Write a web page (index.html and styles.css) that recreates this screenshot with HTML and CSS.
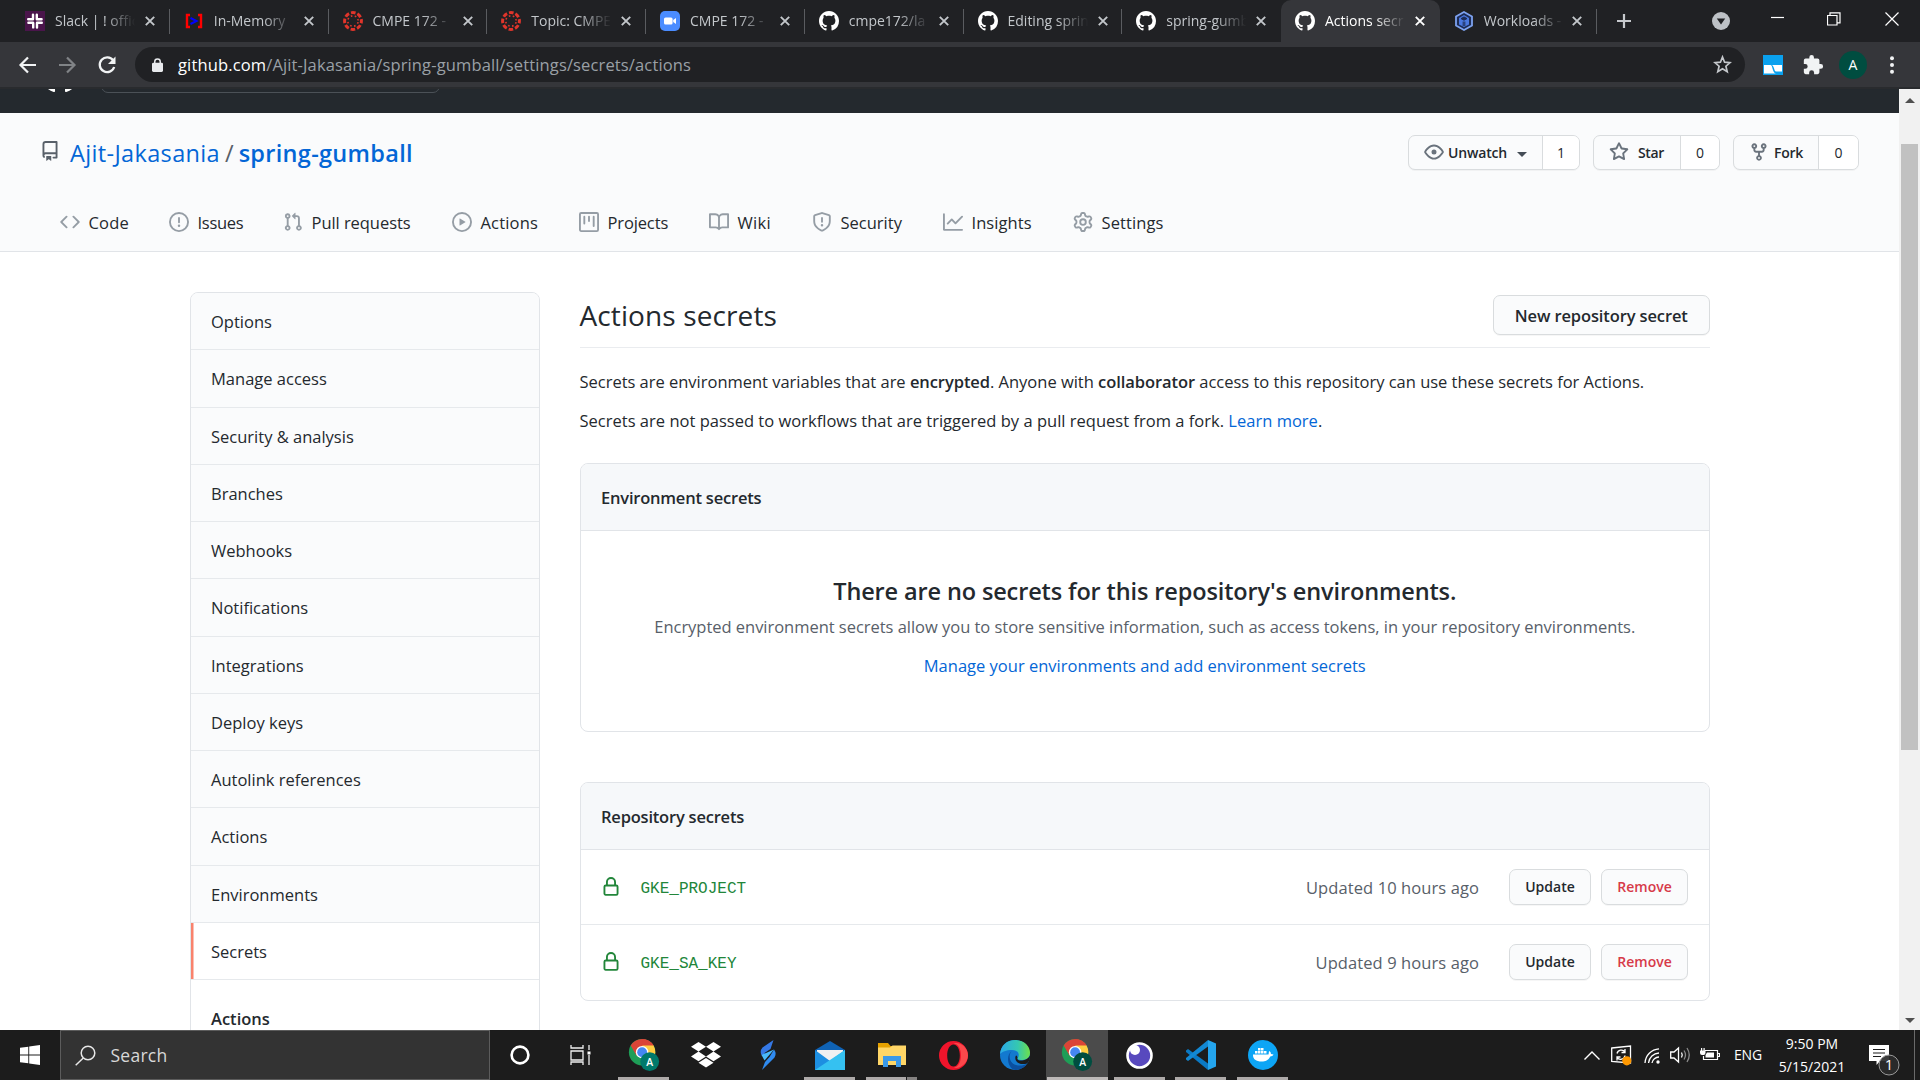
FILE: index.html
```html
<!DOCTYPE html>
<html lang="en">
<head>
<meta charset="utf-8">
<title>Actions secrets</title>
<link rel="stylesheet" href="styles.css">
</head>
<body>
<svg width="0" height="0" class="defs" aria-hidden="true">
  <symbol id="github" viewBox="0 0 16 16"><path fill="currentColor" d="M8 0C3.58 0 0 3.58 0 8c0 3.54 2.29 6.53 5.47 7.59.4.07.55-.17.55-.38 0-.19-.01-.82-.01-1.49-2.01.37-2.53-.49-2.69-.94-.09-.23-.48-.94-.82-1.13-.28-.15-.68-.52-.01-.53.63-.01 1.08.58 1.23.82.72 1.21 1.87.87 2.33.66.07-.52.28-.87.51-1.07-1.78-.2-3.64-.89-3.64-3.95 0-.87.31-1.59.82-2.15-.08-.2-.36-1.02.08-2.12 0 0 .67-.21 2.2.82.64-.18 1.32-.27 2-.27.68 0 1.36.09 2 .27 1.53-1.04 2.2-.82 2.2-.82.44 1.1.16 1.92.08 2.12.51.56.82 1.27.82 2.15 0 3.07-1.87 3.75-3.65 3.95.29.25.54.73.54 1.48 0 1.07-.01 1.93-.01 2.2 0 .21.15.46.55.38A8.013 8.013 0 0016 8c0-4.42-3.58-8-8-8z"/></symbol>
  <symbol id="close" viewBox="0 0 10 10"><path d="M.8.8l8.4 8.4M9.2.8L.8 9.2" stroke="currentColor" stroke-width="1.9" fill="none"/></symbol>
  <symbol id="canvas" viewBox="0 0 20 20"><circle cx="10" cy="10" r="8.4" fill="none" stroke="#e0352b" stroke-width="3" stroke-dasharray="4.6 2" stroke-dashoffset="2.3"/><circle cx="10" cy="10" r="5.2" fill="none" stroke="#e0352b" stroke-width="1.6" stroke-dasharray="1.6 2.48" stroke-dashoffset="-1.2"/></symbol>
  <symbol id="lock" viewBox="0 0 16 16"><path fill="currentColor" fill-rule="evenodd" d="M4 4v2h-.25A1.75 1.75 0 002 7.75v5.5c0 .966.784 1.75 1.75 1.75h8.5A1.75 1.75 0 0014 13.25v-5.5A1.75 1.75 0 0012.25 6H12V4a4 4 0 10-8 0zm6.5 2V4a2.5 2.5 0 10-5 0v2h5zM12 7.5h.25a.25.25 0 01.25.25v5.5a.25.25 0 01-.25.25h-8.5a.25.25 0 01-.25-.25v-5.5a.25.25 0 01.25-.25H12z"/></symbol>
  <symbol id="chrome" viewBox="0 0 36 36"><circle cx="16" cy="15" r="14" fill="#1e9e57"/><path d="M16 15L3.9 8A14 14 0 0128.1 8z" fill="#db4437"/><path d="M16 15V1a14 14 0 0112.2 7z" fill="#db4437"/><path d="M16 8h12.1A14 14 0 0116 29l6-10.5z" fill="#ffcd41"/><path d="M3.9 8L10 18.5 16 15V8z" fill="#db4437"/><circle cx="16" cy="15" r="6.6" fill="#fff"/><circle cx="16" cy="15" r="5.2" fill="#4587f3"/></symbol>
</svg>

<header class="tabs">
  <div class="tab"><svg class="fav" viewBox="0 0 20 20"><path fill="#4a154b" d="M0 0h20v20H0z"/><g stroke="#fff" stroke-width="2.4" stroke-linecap="round"><path d="M8 3.6v4.6M3.2 8.2H8M11.8 3.8v4.4M12 8.2h4.6M3.4 11.8H8M8.2 12v4.4M12 11.8h4.8M12 12v4.6"/></g></svg><span class="name">Slack | ! official</span><svg class="x"><use href="#close"/></svg></div>
  <div class="tab"><svg class="fav" viewBox="0 0 20 20"><path d="M6 4H3v12h3M14 4h3v12h-3" fill="none" stroke="#f00" stroke-width="2.4"/><path d="M6.500 7l6 3-6 3" fill="none" stroke="#00f" stroke-width="2"/></svg><span class="name">In-Memory</span><svg class="x"><use href="#close"/></svg></div>
  <div class="tab"><svg class="fav"><use href="#canvas"/></svg><span class="name">CMPE 172 -</span><svg class="x"><use href="#close"/></svg></div>
  <div class="tab"><svg class="fav"><use href="#canvas"/></svg><span class="name">Topic: CMPE</span><svg class="x"><use href="#close"/></svg></div>
  <div class="tab"><svg class="fav" viewBox="0 0 20 20"><rect width="20" height="20" rx="5" fill="#4a8cff"/><rect x="4" y="6.5" width="8.6" height="7" rx="1.6" fill="#fff"/><path d="M13.200 9l2.800-2v6l-2.800-2z" fill="#fff"/></svg><span class="name">CMPE 172 -</span><svg class="x"><use href="#close"/></svg></div>
  <div class="tab"><svg class="fav gh"><use href="#github"/></svg><span class="name">cmpe172/la</span><svg class="x"><use href="#close"/></svg></div>
  <div class="tab"><svg class="fav gh"><use href="#github"/></svg><span class="name">Editing sprin</span><svg class="x"><use href="#close"/></svg></div>
  <div class="tab last"><svg class="fav gh"><use href="#github"/></svg><span class="name">spring-gumb</span><svg class="x"><use href="#close"/></svg></div>
  <div class="tab active"><svg class="fav gh"><use href="#github"/></svg><span class="name">Actions secr</span><svg class="x"><use href="#close"/></svg></div>
  <div class="tab end"><svg class="fav" viewBox="0 0 20 20"><path d="M10 1l8 4.500v9L10 19l-8-4.500v-9z" fill="#1d2c55" stroke="#7da2f0" stroke-width="1.8"/><path d="M10 4l5 3v6.500L10 16l-5-2.500V7z" fill="#4a78e0"/><path d="M10 6l3 1.600-3 1.600-3-1.600zM9.200 10.500V15M10.800 10.500V15" fill="#1d2c55" stroke="#1d2c55"/></svg><span class="name">Workloads -</span><svg class="x"><use href="#close"/></svg></div>
  <svg class="plus" viewBox="0 0 16 16"><path d="M8 1v14M1 8h14" stroke="#c6c9cd" stroke-width="2.200"/></svg>
  <div class="window-controls">
    <svg width="18" height="18" viewBox="0 0 18 18"><circle cx="9" cy="9" r="9" fill="#bdc1c6"/><path d="M4.800 6.500h8.400L9 12.500z" fill="#202124"/></svg>
    <svg class="min" width="14" height="14" viewBox="0 0 14 14"><path d="M0 5.500h13" stroke="#fff" stroke-width="1.200"/></svg>
    <svg class="restore" width="14" height="14" viewBox="0 0 14 14"><path d="M.5 3.500h9.500v9.500H.5zM3 3.500V.8h10v10h-2.800" fill="none" stroke="#fff" stroke-width="1.200"/></svg>
    <svg class="quit" width="14" height="14" viewBox="0 0 14 14"><path d="M.5.5l13 13M13.500.5l-13 13" stroke="#fff" stroke-width="1.200"/></svg>
  </div>
</header>

<div class="toolbar">
  <svg width="20" height="20" viewBox="0 0 20 20" class="nav-ic"><path d="M19 10H4M11 2.500L3.500 10l7.500 7.500" fill="none" stroke="#f1f3f4" stroke-width="2.200"/></svg>
  <svg width="20" height="20" viewBox="0 0 20 20" class="nav-ic"><path d="M2 10h15M10 2.500l7.500 7.500-7.500 7.500" fill="none" stroke="#808386" stroke-width="2.200"/></svg>
  <svg width="20" height="20" viewBox="0 0 20 20" class="nav-ic"><path d="M16.200 5.400A7.400 7.400 0 1017.200 12" fill="none" stroke="#f1f3f4" stroke-width="2.300"/><path d="M18.500 1.500v7.500H11z" fill="#f1f3f4"/></svg>
  <div class="omnibox">
    <svg width="11" height="14" viewBox="0 0 12 15"><rect y="5" width="12" height="10" rx="1.500" fill="#e8eaed"/><path d="M3 6V4a3 3 0 016 0v2" fill="none" stroke="#e8eaed" stroke-width="1.600"/></svg>
    <span class="url"><b>github.com</b>/Ajit-Jakasania/spring-gumball/settings/secrets/actions</span>
    <svg class="bookmark" width="19" height="19" viewBox="0 0 19 19"><path d="M9.500 2l2.100 5.200 5.500.4-4.200 3.600 1.300 5.400-4.700-2.900-4.700 2.900 1.300-5.400-4.200-3.600 5.500-.4z" fill="none" stroke="#c4c7cb" stroke-width="1.700"/></svg>
  </div>
  <svg class="ext" width="20" height="20" viewBox="0 0 20 20"><path fill="#0aa1ee" d="M0 0h20v20H0z"/><path fill="#fff" d="M1 10h6.500c2.500 0 1.500 8.500 6 8.500H1zM9 10h10v6.500h-6C11 16.500 11.500 11.500 9 10z"/></svg>
  <svg class="puzzle" width="22" height="22" viewBox="0 0 24 24"><path fill="#f1f3f4" d="M20.500 11H19V7a2 2 0 00-2-2h-4V3.500a2.500 2.500 0 00-5 0V5H4a2 2 0 00-2 2v3.800h1.500a2.700 2.700 0 010 5.400H2V20a2 2 0 002 2h3.800v-1.500a2.700 2.700 0 015.400 0V22H17a2 2 0 002-2v-4h1.500a2.500 2.500 0 000-5z"/></svg>
  <span class="avatar">A</span>
  <svg class="dots" width="4" height="18" viewBox="0 0 4 18"><g fill="#f1f3f4"><circle cx="2" cy="2.200" r="2"/><circle cx="2" cy="9" r="2"/><circle cx="2" cy="15.800" r="2"/></g></svg>
</div>

<main class="viewport">
  <div class="page">
    <div class="gh-bar"><svg class="gh-logo"><use href="#github"/></svg><div class="gh-search"></div></div>
    <div class="repo-head">
      <div class="repo-row">
        <svg class="repo-ic" viewBox="0 0 16 16"><path fill="currentColor" fill-rule="evenodd" d="M2 2.500A2.500 2.500 0 014.500 0h8.750a.75.75 0 01.75.75v12.500a.75.75 0 01-.75.75h-2.500a.75.75 0 110-1.500h1.750v-2h-8a1 1 0 00-.714 1.700.75.75 0 01-1.072 1.050A2.495 2.495 0 012 11.500v-9zm10.500-1V9h-8c-.356 0-.694.074-1 .208V2.500a1 1 0 011-1h8zM5 12.250v3.250a.25.25 0 00.4.2l1.450-1.087a.25.25 0 01.3 0L8.600 15.700a.25.25 0 00.4-.2v-3.250a.25.25 0 00-.25-.25h-3.500a.25.25 0 00-.25.25z"/></svg>
        <h1 class="repo-name"><a class="owner">Ajit-Jakasania</a><span class="slash">/</span><a class="repo">spring-gumball</a></h1>
        <div class="social">
          <div class="btn-pair watch"><span class="l"><svg viewBox="0 0 16 16"><path fill="currentColor" fill-rule="evenodd" d="M1.679 7.932c.412-.621 1.242-1.750 2.366-2.717C5.175 4.242 6.527 3.500 8 3.500c1.473 0 2.824.742 3.955 1.715 1.124.967 1.954 2.096 2.366 2.717a.119.119 0 010 .136c-.412.621-1.242 1.750-2.366 2.717C10.825 11.758 9.473 12.500 8 12.500c-1.473 0-2.824-.742-3.955-1.715C2.920 9.818 2.090 8.690 1.679 8.068a.119.119 0 010-.136zM8 2c-1.981 0-3.670.992-4.933 2.078C1.797 5.169.88 6.423.43 7.100a1.619 1.619 0 000 1.798c.45.678 1.367 1.932 2.637 3.024C4.329 13.008 6.019 14 8 14c1.981 0 3.670-.992 4.933-2.078 1.270-1.091 2.187-2.345 2.637-3.023a1.619 1.619 0 000-1.798c-.45-.678-1.367-1.932-2.637-3.023C11.671 2.992 9.981 2 8 2zm0 8a2 2 0 100-4 2 2 0 000 4z"/></svg><span>Unwatch</span><i class="caret"></i></span><span class="n">1</span></div>
          <div class="btn-pair star"><span class="l"><svg viewBox="0 0 16 16"><path fill="currentColor" fill-rule="evenodd" d="M8 .25a.75.75 0 01.673.418l1.882 3.815 4.210.612a.75.75 0 01.416 1.279l-3.046 2.970.719 4.192a.75.75 0 01-1.088.791L8 12.347l-3.766 1.980a.75.75 0 01-1.088-.79l.72-4.194L.818 6.374a.75.75 0 01.416-1.280l4.210-.611L7.327.668A.75.75 0 018 .25zm0 2.445L6.615 5.500a.75.75 0 01-.564.41l-3.097.45 2.240 2.184a.75.75 0 01.216.664l-.528 3.084 2.769-1.456a.75.75 0 01.698 0l2.770 1.456-.53-3.084a.75.75 0 01.216-.664l2.240-2.183-3.096-.45a.75.75 0 01-.564-.41L8 2.694v.001z"/></svg><span>Star</span></span><span class="n">0</span></div>
          <div class="btn-pair fork"><span class="l"><svg viewBox="0 0 16 16"><path fill="currentColor" fill-rule="evenodd" d="M5 3.250a.75.75 0 11-1.500 0 .75.75 0 011.500 0zm0 2.122a2.250 2.250 0 10-1.500 0v.878A2.250 2.250 0 005.750 8.500h1.500v2.128a2.251 2.251 0 101.500 0V8.500h1.500a2.250 2.250 0 002.250-2.250v-.878a2.250 2.250 0 10-1.500 0v.878a.75.75 0 01-.75.75h-4.500A.75.75 0 015 6.250v-.878zm3.750 7.378a.75.75 0 11-1.500 0 .75.75 0 011.500 0zm3-8.750a.75.75 0 100-1.500.75.75 0 000 1.500z"/></svg><span>Fork</span></span><span class="n">0</span></div>
        </div>
      </div>
      <nav class="repo-nav">
        <a class="w-code"><svg viewBox="0 0 16 16"><path d="M4.720 3.220a.75.75 0 011.060 1.060L2.060 8l3.720 3.720a.75.75 0 11-1.060 1.060L.47 8.530a.75.75 0 010-1.060l4.250-4.250zm6.560 0a.75.75 0 10-1.060 1.060L13.940 8l-3.720 3.720a.75.75 0 101.060 1.060l4.250-4.250a.75.75 0 000-1.060l-4.250-4.250z"/></svg>Code</a>
        <a class="w-issues"><svg viewBox="0 0 16 16"><path d="M8 1.500a6.500 6.500 0 100 13 6.500 6.500 0 000-13zM0 8a8 8 0 1116 0A8 8 0 010 8zm9 3a1 1 0 11-2 0 1 1 0 012 0zm-.25-6.250a.75.75 0 00-1.500 0v3.500a.75.75 0 001.500 0v-3.500z"/></svg>Issues</a>
        <a class="w-pulls"><svg viewBox="0 0 16 16"><path d="M7.177 3.073L9.573.677A.25.25 0 0110 .854v4.792a.25.25 0 01-.427.177L7.177 3.427a.25.25 0 010-.354zM3.750 2.500a.75.75 0 100 1.500.75.75 0 000-1.500zm-2.250.75a2.250 2.250 0 113 2.122v5.256a2.251 2.251 0 11-1.500 0V5.372A2.250 2.250 0 011.500 3.250zM11 2.500h-1V4h1a1 1 0 011 1v5.628a2.251 2.251 0 101.500 0V5A2.500 2.500 0 0011 2.500zm1 10.250a.75.75 0 111.500 0 .75.75 0 01-1.500 0zM3.750 12a.75.75 0 100 1.500.75.75 0 000-1.500z"/></svg>Pull requests</a>
        <a class="w-actions"><svg viewBox="0 0 16 16"><path d="M1.500 8a6.500 6.500 0 1113 0 6.500 6.500 0 01-13 0zM8 0a8 8 0 100 16A8 8 0 008 0zM6.379 5.227A.25.25 0 006 5.442v5.117a.25.25 0 00.379.214l4.264-2.559a.25.25 0 000-.428L6.379 5.227z"/></svg>Actions</a>
        <a class="w-projects"><svg viewBox="0 0 16 16"><path d="M1.750 0A1.750 1.750 0 000 1.750v12.500C0 15.216.784 16 1.750 16h12.500A1.750 1.750 0 0016 14.250V1.750A1.750 1.750 0 0014.250 0H1.750zM1.500 1.750a.25.25 0 01.25-.25h12.500a.25.25 0 01.25.25v12.500a.25.25 0 01-.25.25H1.750a.25.25 0 01-.25-.25V1.750zM11.750 3a.75.75 0 00-.75.75v7.500a.75.75 0 001.500 0v-7.500a.75.75 0 00-.75-.75zm-8.250.75a.75.75 0 011.500 0v5.500a.75.75 0 01-1.500 0v-5.500zM8 3a.75.75 0 00-.75.75v3.500a.75.75 0 001.500 0v-3.500A.75.75 0 008 3z"/></svg>Projects</a>
        <a class="w-wiki"><svg viewBox="0 0 16 16"><path d="M0 1.750A.75.75 0 01.75 1h4.253c1.227 0 2.317.59 3 1.501A3.744 3.744 0 0111.006 1h4.245a.75.75 0 01.75.75v10.500a.75.75 0 01-.75.75h-4.507a2.250 2.250 0 00-1.591.659l-.622.621a.75.75 0 01-1.060 0l-.622-.621A2.250 2.250 0 005.258 13H.75a.75.75 0 01-.75-.75V1.750zm8.755 3a2.250 2.250 0 012.250-2.250H14.500v9h-3.757c-.71 0-1.400.201-1.992.572l.004-7.322zm-1.504 7.324l.004-5.073-.002-2.253A2.250 2.250 0 005.003 2.500H1.500v9h3.757a3.750 3.750 0 011.994.574z"/></svg>Wiki</a>
        <a class="w-security"><svg viewBox="0 0 16 16"><path d="M7.467.133a1.750 1.750 0 011.066 0l5.250 1.680A1.750 1.750 0 0115 3.480V7c0 1.566-.32 3.182-1.303 4.682-.983 1.498-2.585 2.813-5.032 3.855a1.700 1.700 0 01-1.330 0c-2.447-1.042-4.049-2.357-5.032-3.855C1.320 10.182 1 8.566 1 7V3.480a1.750 1.750 0 011.217-1.667l5.250-1.680zm.61 1.429a.25.25 0 00-.153 0l-5.250 1.680a.25.25 0 00-.174.238V7c0 1.358.275 2.666 1.057 3.860.784 1.194 2.121 2.340 4.366 3.297a.2.2 0 00.154 0c2.245-.956 3.582-2.104 4.366-3.298C13.225 9.666 13.500 8.360 13.500 7V3.480a.25.25 0 00-.174-.237l-5.250-1.680zM9 10.500a1 1 0 11-2 0 1 1 0 012 0zm-.25-5.750a.75.75 0 10-1.500 0v3a.75.75 0 001.500 0v-3z"/></svg>Security</a>
        <a class="w-insights"><svg viewBox="0 0 16 16"><path d="M1.500 1.750a.75.75 0 00-1.500 0v12.500c0 .414.336.75.75.75h14.500a.75.75 0 000-1.500H1.500V1.750zm14.280 2.530a.75.75 0 00-1.060-1.060L10 7.940 7.530 5.470a.75.75 0 00-1.060 0L3.220 8.720a.75.75 0 001.060 1.060L7 7.060l2.470 2.470a.75.75 0 001.060 0l5.250-5.250z"/></svg>Insights</a>
        <a class="w-settings"><svg viewBox="0 0 16 16"><path d="M7.429 1.525a6.593 6.593 0 011.142 0c.036.003.108.036.137.146l.289 1.105c.147.56.55.967.997 1.189.174.086.341.183.501.29.417.278.97.423 1.530.27l1.102-.303c.11-.03.175.016.195.046.219.31.41.641.573.989.014.031.022.11-.059.19l-.815.806c-.411.406-.562.957-.53 1.456a4.588 4.588 0 010 .582c-.032.499.119 1.050.53 1.456l.815.806c.08.08.073.159.059.19a6.494 6.494 0 01-.573.99c-.02.029-.086.074-.195.045l-1.103-.303c-.559-.153-1.112-.008-1.529.27-.16.107-.327.204-.5.29-.449.222-.851.628-.998 1.189l-.289 1.105c-.029.11-.101.143-.137.146a6.613 6.613 0 01-1.142 0c-.036-.003-.108-.037-.137-.146l-.289-1.105c-.147-.56-.55-.967-.997-1.189a4.502 4.502 0 01-.501-.29c-.417-.278-.97-.423-1.530-.27l-1.102.303c-.11.03-.175-.016-.195-.046a6.492 6.492 0 01-.573-.989c-.014-.031-.022-.11.059-.19l.815-.806c.411-.406.562-.957.53-1.456a4.587 4.587 0 010-.582c.032-.499-.119-1.050-.53-1.456l-.815-.806c-.08-.08-.073-.159-.059-.19a6.440 6.440 0 01.573-.99c.02-.029.086-.075.195-.045l1.103.303c.559.153 1.112.008 1.529-.27.16-.107.327-.204.5-.29.449-.222.851-.628.998-1.189l.289-1.105c.029-.11.101-.143.137-.146zM8 0c-.236 0-.47.01-.701.03-.743.065-1.290.615-1.458 1.261l-.29 1.106c-.017.066-.078.158-.211.224a5.994 5.994 0 00-.668.386c-.123.082-.233.09-.3.071L3.270 2.776c-.644-.177-1.392.02-1.820.63a7.977 7.977 0 00-.704 1.217c-.315.675-.111 1.422.363 1.891l.815.806c.05.048.098.147.088.294a6.084 6.084 0 000 .772c.01.147-.038.246-.088.294l-.815.806c-.474.469-.678 1.216-.363 1.891.2.428.436.835.704 1.218.428.609 1.176.806 1.820.63l1.103-.303c.066-.019.176-.011.299.071.213.143.436.272.668.386.133.066.194.158.212.224l.289 1.106c.169.646.715 1.196 1.458 1.260a8.094 8.094 0 001.402 0c.743-.064 1.290-.614 1.458-1.260l.29-1.106c.017-.066.078-.158.211-.224a5.980 5.980 0 00.668-.386c.123-.082.233-.09.3-.071l1.102.302c.644.177 1.392-.02 1.820-.63.268-.382.505-.789.704-1.217.315-.675.111-1.422-.364-1.891l-.814-.806c-.05-.048-.098-.147-.088-.294a6.100 6.100 0 000-.772c-.01-.147.039-.246.088-.294l.814-.806c.475-.469.679-1.216.364-1.891a7.992 7.992 0 00-.704-1.218c-.428-.609-1.176-.806-1.820-.63l-1.103.303c-.066.019-.176.011-.299-.071a5.991 5.991 0 00-.668-.386c-.133-.066-.194-.158-.212-.224L10.160 1.290C9.990.645 9.444.095 8.701.031A8.094 8.094 0 008 0zm1.500 8a1.500 1.500 0 11-3 0 1.500 1.500 0 013 0zM11 8a3 3 0 11-6 0 3 3 0 016 0z"/></svg>Settings</a>
      </nav>
    </div>

    <div class="columns">
      <aside class="side">
        <a>Options</a><a>Manage access</a><a>Security &amp; analysis</a><a>Branches</a><a>Webhooks</a><a>Notifications</a><a>Integrations</a><a>Deploy keys</a><a>Autolink references</a><a>Actions</a><a>Environments</a><a class="current">Secrets</a>
        <div class="group">Actions</div>
      </aside>
      <section class="main">
        <div class="subhead"><h2>Actions secrets</h2><a class="btn big">New repository secret</a></div>
        <p class="p1">Secrets are environment variables that are <b>encrypted</b>. Anyone with <b>collaborator</b> access to this repository can use these secrets for Actions.</p>
        <p class="p2">Secrets are not passed to workflows that are triggered by a pull request from a fork. <a>Learn more</a>.</p>
        <div class="box">
          <div class="box-head">Environment secrets</div>
          <div class="blank">
            <h3>There are no secrets for this repository's environments.</h3>
            <p>Encrypted environment secrets allow you to store sensitive information, such as access tokens, in your repository environments.</p>
            <a>Manage your environments and add environment secrets</a>
          </div>
        </div>
        <div class="box second">
          <div class="box-head">Repository secrets</div>
          <div class="row"><svg class="lk"><use href="#lock"/></svg><code>GKE_PROJECT</code><span class="when">Updated 10 hours ago</span><a class="btn">Update</a><a class="btn danger">Remove</a></div>
          <div class="row"><svg class="lk"><use href="#lock"/></svg><code>GKE_SA_KEY</code><span class="when">Updated 9 hours ago</span><a class="btn">Update</a><a class="btn danger">Remove</a></div>
        </div>
      </section>
    </div>
  </div>
  <div class="scrollbar"><i class="up"></i><i class="thumb"></i><i class="down"></i></div>
</main>

<footer class="taskbar">
  <div class="start"><svg width="20" height="20" viewBox="0 0 20 20"><path fill="#fff" d="M0 2.800L8.300 1.700v7.900H0zM9.200 1.500L20 0v9.600H9.200zM0 10.400h8.300v7.900L0 17.200zM9.200 10.400H20V20L9.200 18.500z"/></svg></div>
  <div class="search"><svg width="21" height="21" viewBox="0 0 21 21"><circle cx="13" cy="8" r="6.800" fill="none" stroke="#e8e8e8" stroke-width="1.500"/><path d="M8.300 13L.7 20.300" stroke="#e8e8e8" stroke-width="1.500"/></svg><span>Search</span></div>
  <div class="sys"><svg width="20" height="20" viewBox="0 0 20 20"><circle cx="10" cy="10" r="8.400" fill="none" stroke="#fff" stroke-width="2.600"/></svg></div>
  <div class="sys"><svg width="21" height="20" viewBox="0 0 21 20"><path d="M1 0v3h12V0M1 6h12v9H1zM1 20v-3h12v3M19 0v5M19 10v10" fill="none" stroke="#f0f0f0" stroke-width="1.300"/><path fill="#fff" d="M17.500 6.500h3v3h-3z"/></svg></div>
  <div class="apps">
    <div class="app run"><svg width="34" height="34" viewBox="0 0 36 36"><use href="#chrome"/><circle cx="24" cy="25" r="10" fill="#00796b"/><text x="24" y="29.5" class="badge-a">A</text></svg></div>
    <div class="app"><svg width="30" height="26" viewBox="0 0 30 26"><path fill="#fff" d="M7.500 0L15 4.800 7.500 9.600 0 4.800zM22.500 0L30 4.800l-7.500 4.800L15 4.800zM7.500 9.600l7.500 4.800-7.500 4.800L0 14.400zM22.500 9.600l7.500 4.800-7.500 4.800-7.500-4.800zM15 16l7.500 4.800L15 25.600l-7.500-4.800z"/></svg></div>
    <div class="app"><svg width="16" height="30" viewBox="0 0 16 30"><path fill="#3578e5" d="M13.500 0L2.500 7.500Q-.5 11 1.500 15l4 3-1-5 6-4z"/><path fill="#49b8fa" d="M1.500 15L14 9.500 4.500 20.500z"/><path fill="#2f8bf0" d="M14 9.500q3 4 .5 8L2 30l3-8 4.500-5z"/></svg></div>
    <div class="app run"><svg width="30" height="29" viewBox="0 0 30 29"><path fill="#0f62b4" d="M0 9L15 0l15 9v5H0z"/><path fill="#f1f1f1" d="M2 9h26v7L15 21 2 16z"/><path fill="#1d8fe1" d="M0 9l15 11L30 9v20H0z"/><path fill="#35c1f1" d="M0 29L30 9v20z"/></svg></div>
    <div class="app run stack"><svg width="28" height="24" viewBox="0 0 28 24"><path fill="#e5a100" d="M0 0h10l2.500 3H28v6H0z"/><path fill="#ffd667" d="M0 4.500h12l2.500-2H28V22H0z"/><path fill="#3b99e8" d="M5 13h18v11h-5v-6h-8v6H5z"/></svg></div>
    <div class="app"><svg width="29" height="29" viewBox="0 0 29 29"><path fill="#f0142b" fill-rule="evenodd" d="M14.500 0a14.500 14.500 0 110 29 14.500 14.500 0 010-29zm0 3.500c-4 0-6.300 5-6.300 11s2.300 11 6.300 11 6.300-5 6.300-11-2.300-11-6.300-11z"/><path fill="#ff5a57" d="M14.500 2.500c5 0 7.500 6 7.500 12s-2.500 12-7.500 12c6 2 14.500-4 14.500-12s-8-14-14.500-12z" opacity=".75"/></svg></div>
    <div class="app"><svg width="30" height="30" viewBox="0 0 30 30"><defs><linearGradient id="e1" x1="0" x2="1"><stop offset="0" stop-color="#2aa8e8"/><stop offset=".6" stop-color="#35c8b0"/><stop offset="1" stop-color="#6ee04a"/></linearGradient></defs><circle cx="15" cy="15" r="15" fill="#1379cf"/><path fill="url(#e1)" d="M0 14C1 5 7 0 15 0c9 0 15 6 15 12.500S25 20 21 20c-3 0-4-1-3-2.500 2-3 0-7.500-6-7.500C6 10 2 12 0 14z"/><path fill="#0b4f9f" d="M12 11c-4 3-3 12 4 14 4 1.200 8 .5 11-1.500-3 5-8 6.500-12 6.500C8 29 5 15 12 11z"/><path fill="#1c1c1c" d="M17.500 17.500c-1 1.500.5 3 3.500 3s7-1 9-5c0 4-1 6-3 8-6 2-13-1-11.500-7 .5-2 1.500-1 2 1z"/></svg></div>
    <div class="app run active"><svg width="34" height="34" viewBox="0 0 36 36"><use href="#chrome"/><circle cx="24" cy="25" r="10" fill="#004d40"/><text x="24" y="29.5" class="badge-a">A</text></svg></div>
    <div class="app run"><svg width="27" height="27" viewBox="0 0 27 27"><circle cx="13.500" cy="13.500" r="12" fill="#5849be" stroke="#fff" stroke-width="2.600"/><circle cx="9" cy="8" r="5" fill="#fff"/></svg></div>
    <div class="app run"><svg width="30" height="30" viewBox="0 0 30 30"><path fill="#0a79c4" d="M0 10.500L2 9l20 14.500V30L0 12z"/><path fill="#1288d3" d="M0 19.500L2 21 22 6.500V0L0 18z"/><path fill="#24a5ee" d="M22 0l8 3.500v23L22 30z"/></svg></div>
    <div class="app run"><svg width="30" height="30" viewBox="0 0 30 30"><circle cx="15" cy="15" r="15" fill="#0da5f5"/><path fill="#fff" d="M5 14.500h15.500c.5-1.500 0-2.500.8-3.500 1.400 1 1.700 2 1.600 3 1 0 2 .2 2.600.6-.8 1.500-2 1.800-3.200 1.800-2 4-5 5-8.500 5-6 0-9-2.500-8.800-6.900zM7 11h2.500v2.500H7zM10 11h2.500v2.500H10zM13 11h2.500v2.500H13zM16 11h2.500v2.500H16zM10 8h2.500v2.500H10zM13 8h2.500v2.500H13z"/></svg></div>
  </div>
  <div class="tray">
    <svg width="16" height="9" viewBox="0 0 16 9"><path d="M.5 8.500L8 1l7.500 7.500" fill="none" stroke="#fff" stroke-width="1.400"/></svg>
    <svg width="21" height="21" viewBox="0 0 21 21" class="sync"><path d="M.7 3L19.500 1v17L.7 16.500z" fill="none" stroke="#fff" stroke-width="1.300"/><path d="M6 8.500a4.500 4.500 0 018-1.500M14 4v3.500h-3.500M14 10.500A4.500 4.500 0 016 12.500M6 15.500V12h3.500" fill="none" stroke="#fff" stroke-width="1.300"/><circle cx="15.800" cy="15.800" r="4.600" fill="#ff9800"/></svg>
    <svg width="17" height="16" viewBox="0 0 17 16" class="wifi"><g fill="none" stroke="#fff" stroke-width="1.300"><path d="M1 15A15 15 0 0115 .8M4.500 15A11 11 0 0115 5M8 15a7 7 0 017-6"/></g><circle cx="14" cy="14" r="1.700" fill="#fff"/></svg>
    <svg width="21" height="18" viewBox="0 0 21 18" class="vol"><path d="M.7 6v6h3.300l4.500 4V2L4 6z" fill="none" stroke="#fff" stroke-width="1.300"/><path d="M11.500 6.500q1.500 2.500 0 5" fill="none" stroke="#fff" stroke-width="1.300"/><path d="M14 4.500q3 4.500 0 9M17 2q4.500 7 0 14" fill="none" stroke="#8a8a8a" stroke-width="1.300"/></svg>
    <svg width="20" height="14" viewBox="0 0 20 14" class="bat"><path d="M5 2.500h12.500v9H3.500V8M18 5.500h1.500v3H18" fill="none" stroke="#fff" stroke-width="1.200"/><path d="M7 4.500h7v5H5.500V7zM0 2.500h5.500V5a2 2 0 01-2 2H2a2 2 0 01-2-2zM1 0h1.200v2.500H1zM3.500 0h1.200v2.500H3.500z" fill="#fff"/></svg>
    <span class="lang">ENG</span>
    <span class="clock"><span>9:50 PM</span><span>5/15/2021</span></span>
    <svg width="31" height="31" viewBox="0 0 31 31" class="notif"><path fill="#fff" d="M0 0h20v16h-9l-3.500 4v-4H0z"/><path d="M4 4.500h12M4 8h12M4 11.500h8" stroke="#1c1c1c" stroke-width="1.200"/><circle cx="20" cy="20" r="10" fill="#2b2b2b" fill-opacity=".92" stroke="#9a9a9a"/><text x="20" y="25" class="count">1</text></svg>
    <i class="peek"></i>
  </div>
</footer>
</body>
</html>
```
FILE: styles.css
```css
* { box-sizing: border-box; }
body {
  margin: 0; width: 1920px; height: 1080px; overflow: hidden;
  display: flex; flex-direction: column;
  font: 400 16.5px/26px "Open Sans", "Noto Sans", sans-serif;
  color: #24292e; background: #fff;
}
svg { display: block; flex: none; }
h1, h2, h3, p { margin: 0; font-weight: 400; }
i { display: block; }
.defs { position: absolute; }

/* Browser tabs */
.tabs { height: 42px; flex: none; background: #202124; display: flex; padding-left: 11px; }
.tab {
  width: 158.75px; height: 42px; flex: none; display: flex; align-items: center;
  padding: 0 14px; font-size: 14px; color: #c3c7cb;
  background: linear-gradient(#5a5c60, #5a5c60) right 9px / 1px 25px no-repeat;
}
.tab.last { background: none; }
.tab.end { width: 157.5px; }
.fav { width: 20px; height: 20px; }
.gh { color: #fff; }
.name {
  width: 82px; margin-left: 10px; overflow: hidden; white-space: nowrap;
  -webkit-mask-image: linear-gradient(to right, #000 60%, transparent 98%);
  mask-image: linear-gradient(to right, #000 60%, transparent 98%);
}
.x { width: 10px; height: 10px; margin-left: 8px; }
.end .x { margin-left: 6px; }
.tab.active { background: #35363a; color: #fff; border-radius: 10px 10px 0 0; }
.plus { width: 16px; height: 16px; margin: 13px 0 0 19px; }
.window-controls { margin-left: auto; margin-right: 21px; display: flex; padding-top: 12px; }
.min { margin-left: 41px; }
.restore { margin-left: 42px; }
.quit { margin-left: 44px; }

/* Address bar */
.toolbar { height: 47px; flex: none; background: #35363a; border-bottom: 2px solid #292b2e; display: flex; align-items: center; padding-left: 17px; }
.nav-ic { margin-right: 20px; }
.omnibox { width: 1610px; height: 35px; margin-left: -2px; border-radius: 18px; background: #202124; display: flex; align-items: center; padding: 0 13px 0 17px; }
.url { margin-left: 15px; color: #9aa0a6; letter-spacing: .0085em; white-space: nowrap; }
.url b { font-weight: 400; color: #fff; }
.bookmark { margin-left: auto; }
.ext { margin-left: 17.5px; }
.puzzle { margin-left: 19.5px; }
.avatar { width: 28px; height: 28px; margin-left: 15px; border-radius: 50%; background: #004d40; color: #fff; font-size: 14px; line-height: 28px; text-align: center; }
.dots { margin-left: 23px; }

/* Page viewport */
.viewport { flex: 1; min-height: 0; display: flex; }
.page { flex: 1; overflow: hidden; }
.scrollbar { width: 21px; background: #f1f1f1; display: flex; flex-direction: column; align-items: center; }
.up { margin-top: 9px; border: 5px solid transparent; border-top: 0; border-bottom-color: #505050; }
.thumb { width: 17px; height: 606px; margin-top: 41px; background: #c1c1c1; }
.down { margin-top: auto; margin-bottom: 7px; border: 5px solid transparent; border-bottom: 0; border-top-color: #505050; }

.gh-bar { height: 24px; background: #24292e; display: flex; align-items: flex-start; padding-left: 40px; color: #fff; overflow: hidden; }
.gh-logo { width: 40px; height: 40px; margin-top: -36px; }
.gh-search { width: 339px; height: 35px; margin: -31px 0 0 20.5px; border: 1px solid #4b5157; border-radius: 7px; }

.repo-head { height: 139px; background: #fafbfc; border-bottom: 1px solid #e1e4e8; padding: 22px 40px 0; }
.repo-row { height: 35px; display: flex; align-items: center; }
.repo-ic { width: 20px; height: 20px; margin-top: -3px; color: #586069; }
.repo-name { display: flex; font-size: 23.5px; line-height: 35px; margin: 2px 0 0 10px; color: #0366d6; }
.owner { letter-spacing: .0149em; }
.slash { color: #586069; margin: 0 5px; }
.repo { font-weight: 600; letter-spacing: .013em; }
.social { margin-left: auto; display: flex; gap: 13px; font: 600 14px/33px "Open Sans", sans-serif; }
.btn-pair { height: 35px; display: flex; border: 1px solid #d9dcde; border-radius: 7px; background: #fafbfc; box-shadow: 0 1px 0 rgba(27,31,35,.04); overflow: hidden; }
.btn-pair .l { flex: 1; display: flex; align-items: center; padding-left: 15px; }
.btn-pair .n { background: #fff; border-left: 1px solid #d9dcde; text-align: center; font-weight: 500; }
.btn-pair svg { width: 20px; height: 20px; color: #6a737d; margin-top: -2px; }
.watch { width: 172px; } .watch .n { width: 37px; } .watch .l span { margin-left: 4px; letter-spacing: -.0124em; }
.star { width: 127px; } .star .n { width: 39px; } .star .l span { margin-left: 9px; letter-spacing: -.025em; }
.fork { width: 126px; } .fork .n { width: 40px; } .fork .l span { margin-left: 5px; letter-spacing: -.019em; }
.caret { margin-left: 10px; margin-top: 4px; border: 5px solid transparent; border-bottom: 0; border-top-color: #444d56; }

.repo-nav { height: 60px; margin-top: 22px; padding-left: 20px; display: flex; gap: 40px; line-height: 60px; padding-top: 1px; }
.repo-nav a { display: flex; align-items: center; height: 60px; white-space: nowrap; }
.repo-nav svg { width: 20px; height: 20px; margin: -3px 8.5px 0 0; fill: #959da5; fill-rule: evenodd; }
.w-code { width: 69px; letter-spacing: .01em; }
.w-issues { width: 74px; letter-spacing: -.018em; }
.w-pulls { width: 129px; letter-spacing: -.003em; }
.w-actions { width: 87px; letter-spacing: .01em; }
.w-projects { width: 90px; letter-spacing: -.008em; }
.w-wiki { width: 63px; letter-spacing: .02em; }
.w-security { width: 91px; }
.w-insights { width: 90px; letter-spacing: .004em; }
.w-settings { width: 92px; letter-spacing: .006em; }

/* Settings layout */
.columns { display: flex; padding: 40px 0 0 190px; gap: 39.5px; }
.side { width: 350px; height: 760px; border: 1px solid #e1e4e8; border-radius: 8px 8px 0 0; overflow: hidden; }
.side a { display: block; height: 57.25px; line-height: 58px; padding-left: 20px; background: #fafbfc; border-bottom: 1px solid #e6e9ec; }
.side a.current { background: #fff; box-shadow: inset 2.5px 0 #f9826c; }
.group { padding: 26px 0 0 20px; font-weight: 600; }
.main { width: 1130.5px; }
.subhead { height: 56px; border-bottom: 1px solid #eaecef; display: flex; justify-content: space-between; align-items: center; padding-bottom: 9px; }
h2 { font-size: 28px; letter-spacing: .004em; }
.btn { height: 35.5px; line-height: 34px; width: 82px; text-align: center; border: 1px solid #d9dcde; border-radius: 7px; background: #fafbfc; box-shadow: 0 1px 0 rgba(27,31,35,.04); font-size: 14px; font-weight: 600; }
.btn.big { width: 217.5px; height: 40px; line-height: 39px; font-size: 16.5px; letter-spacing: -.0072em; }
.p1 { margin-top: 21px; white-space: nowrap; letter-spacing: -.001em; }
.p1 b { letter-spacing: -.004em; }
.p2 { margin-top: 13px; white-space: nowrap; letter-spacing: .0008em; }
.main p a, .blank a { color: #0366d6; }
b { font-weight: 600; }
.box { margin-top: 29px; height: 269px; border: 1px solid #e1e4e8; border-radius: 8px; overflow: hidden; }
.box.second { margin-top: 50px; height: 219px; }
.box-head { height: 67px; line-height: 67px; padding-left: 20.5px; background: #f6f8fa; border-bottom: 1px solid #e1e4e8; font-weight: 600; letter-spacing: -.0125em; }
.blank { padding-top: 44px; text-align: center; }
.blank h3 { font-size: 23.5px; line-height: 32px; font-weight: 600; letter-spacing: -.0055em; }
.blank p { margin-top: 7px; color: #586069; letter-spacing: -.0018em; white-space: nowrap; }
.blank a { display: block; margin-top: 12.5px; }
.row { height: 75px; display: flex; align-items: center; padding: 0 21px 0 20px; }
.row:nth-child(2) { height: 74px; }
.row + .row { border-top: 1px solid #e6e9ec; }
.lk { width: 20px; height: 20px; color: #22863a; }
code { margin-left: 20px; font: 16px/26px "Liberation Mono", monospace; color: #22863a; padding-top: 3px; }
.when { margin-left: auto; margin-right: 30px; color: #586069; letter-spacing: .0055em; padding-top: 2px; }
.row .btn + .btn { margin-left: 10px; width: 87px; }
.danger { color: #d73a49; }

/* Taskbar */
.taskbar { height: 50px; flex: none; background: #1c1c1c; display: flex; color: #fff; }
.start { width: 60px; display: flex; align-items: center; justify-content: center; }
.search { width: 430px; background: #333; border: 1px solid #5c5c5c; display: flex; align-items: center; padding-left: 14px; font-size: 17.5px; letter-spacing: .015em; color: #d8d8d8; }
.search span { margin-left: 14.5px; }
.sys { width: 60px; display: flex; align-items: center; justify-content: center; }
.apps { display: flex; margin-left: 3px; }
.app { width: 61.9px; height: 50px; display: flex; align-items: center; justify-content: center; }
.run { background: linear-gradient(#aeaaa9, #aeaaa9) center bottom / 51px 3px no-repeat; }
.stack { background: linear-gradient(to right, #aeaaa9 40px, #1c1c1c 40px, #1c1c1c 41px, #858281 41px) center bottom / 51px 3px no-repeat; }
.active.app { background: linear-gradient(#bdb9b8, #bdb9b8) center bottom / 61px 3px no-repeat #4b4b4b; }
.badge-a { font: 600 11px "Open Sans", sans-serif; fill: #fff; text-anchor: middle; }
.tray { margin-left: auto; display: flex; align-items: center; font-size: 14px; }
.tray > svg:first-child { margin-right: -1px; }
.sync { margin-left: 12px; }
.wifi { margin-left: 12px; margin-top: 2px; }
.vol { margin-left: 9px; }
.bat { margin-left: 9px; margin-right: 1px; }
.lang { margin-left: 13px; letter-spacing: -.01em; }
.clock { width: 68px; margin-left: 16px; display: flex; flex-direction: column; text-align: center; line-height: 23px; }
.notif { margin-left: 23px; margin-top: 10px; }
.count { font: 15px "Open Sans", sans-serif; fill: #fff; text-anchor: middle; }
.peek { width: 1px; height: 50px; margin: 0 5px 0 14px; background: #6a6a6a; }
```
